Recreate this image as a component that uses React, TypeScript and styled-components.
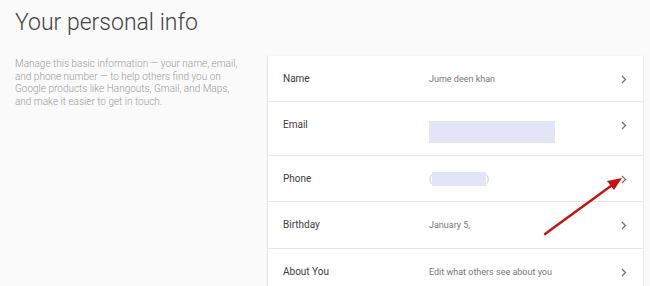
import styled, { createGlobalStyle } from 'styled-components';

const GlobalStyle = createGlobalStyle`
  html, body {
    margin: 0;
    padding: 0;
    background: #fafafa;
    font-family: Roboto, 'Liberation Sans', Arial, sans-serif;
  }
`;

const Page = styled.div`
  position: relative;
  width: 650px;
  height: 286px;
  overflow: hidden;
  background: #fafafa;
`;

const Title = styled.h1`
  margin: 0;
  padding: 9px 0 0 15px;
  height: 56px;
  box-sizing: border-box;
  font-size: 23px;
  font-weight: 300;
  line-height: 28px;
  color: #444;
`;

const Body = styled.div`
  display: grid;
  grid-template-columns: 267px 377px;
`;

const Intro = styled.p`
  margin: 2px 0 0 15px;
  width: 231px;
  font-size: 10px;
  font-weight: 300;
  line-height: 12.6px;
  color: #9a9a9a;
`;

const Card = styled.div`
  background: #fff;
  border-left: 1px solid #e6e6e6;
  border-right: 1px solid #ececec;
  box-shadow: 0 0 2px rgba(0, 0, 0, 0.06);
`;

const Row = styled.div<{ $h: number }>`
  display: flex;
  align-items: flex-start;
  height: ${(p) => p.$h}px;
  box-sizing: border-box;
  padding: 16px 0 0 15px;
  border-bottom: 1px solid #e8e8e8;
`;

const Label = styled.div`
  width: 146px;
  font-size: 10px;
  line-height: 14px;
  color: #3c3c3c;
`;

const Value = styled.div`
  flex: 1;
  font-size: 9px;
  line-height: 14px;
  color: #777;
`;

const Hidden = styled.div<{ $w: number; $h: number; $top: number }>`
  width: ${(p) => p.$w}px;
  height: ${(p) => p.$h}px;
  margin-top: ${(p) => p.$top}px;
  background: #e4e4f8;
`;

const Phone = styled.div`
  display: flex;
  align-items: center;
  color: #c4c4c4;
  font-size: 9px;
`;

const Chevron = styled.div`
  width: 22px;
  display: flex;
  justify-content: flex-start;
  padding-top: 3px;
`;

const Arrow = styled.svg`
  position: absolute;
  left: 0;
  top: 0;
  pointer-events: none;
`;

function ChevronIcon() {
  return (
    <svg width="6" height="9" viewBox="0 0 6 9">
      <path d="M1 1 L4.5 4.5 L1 8" fill="none" stroke="#6f6f6f" strokeWidth="1.2" />
    </svg>
  );
}

const rows = [
  { label: 'Name', h: 46, value: 'Jume deen khan' },
  { label: 'Email', h: 54, value: 'email' },
  { label: 'Phone', h: 46, value: 'phone' },
  { label: 'Birthday', h: 47, value: 'January 5,' },
  { label: 'About You', h: 47, value: 'Edit what others see about you' },
];

function App() {
  return (
    <>
      <GlobalStyle />
      <Page>
        <Title>Your personal info</Title>
        <Body>
          <Intro>
            Manage this basic information — your name, email, and phone number — to help others find
            you on Google products like Hangouts, Gmail, and Maps, and make it easier to get in touch.
          </Intro>
          <Card>
            {rows.map((r) => (
              <Row key={r.label} $h={r.h}>
                <Label>{r.label}</Label>
                <Value>
                  {r.value === 'email' ? (
                    <Hidden $w={126} $h={22} $top={3} />
                  ) : r.value === 'phone' ? (
                    <Phone>
                      (<Hidden $w={54} $h={14} $top={0} />)
                    </Phone>
                  ) : (
                    r.value
                  )}
                </Value>
                <Chevron>
                  <ChevronIcon />
                </Chevron>
              </Row>
            ))}
          </Card>
        </Body>
        <Arrow width="650" height="286" viewBox="0 0 650 286">
          <line x1="545" y1="234" x2="615" y2="183" stroke="#cc1010" strokeWidth="2.4" strokeLinecap="round" />
          <path d="M622 178 L607 181 L614 190 Z" fill="#cc1010" />
        </Arrow>
      </Page>
    </>
  );
}

export default App;
